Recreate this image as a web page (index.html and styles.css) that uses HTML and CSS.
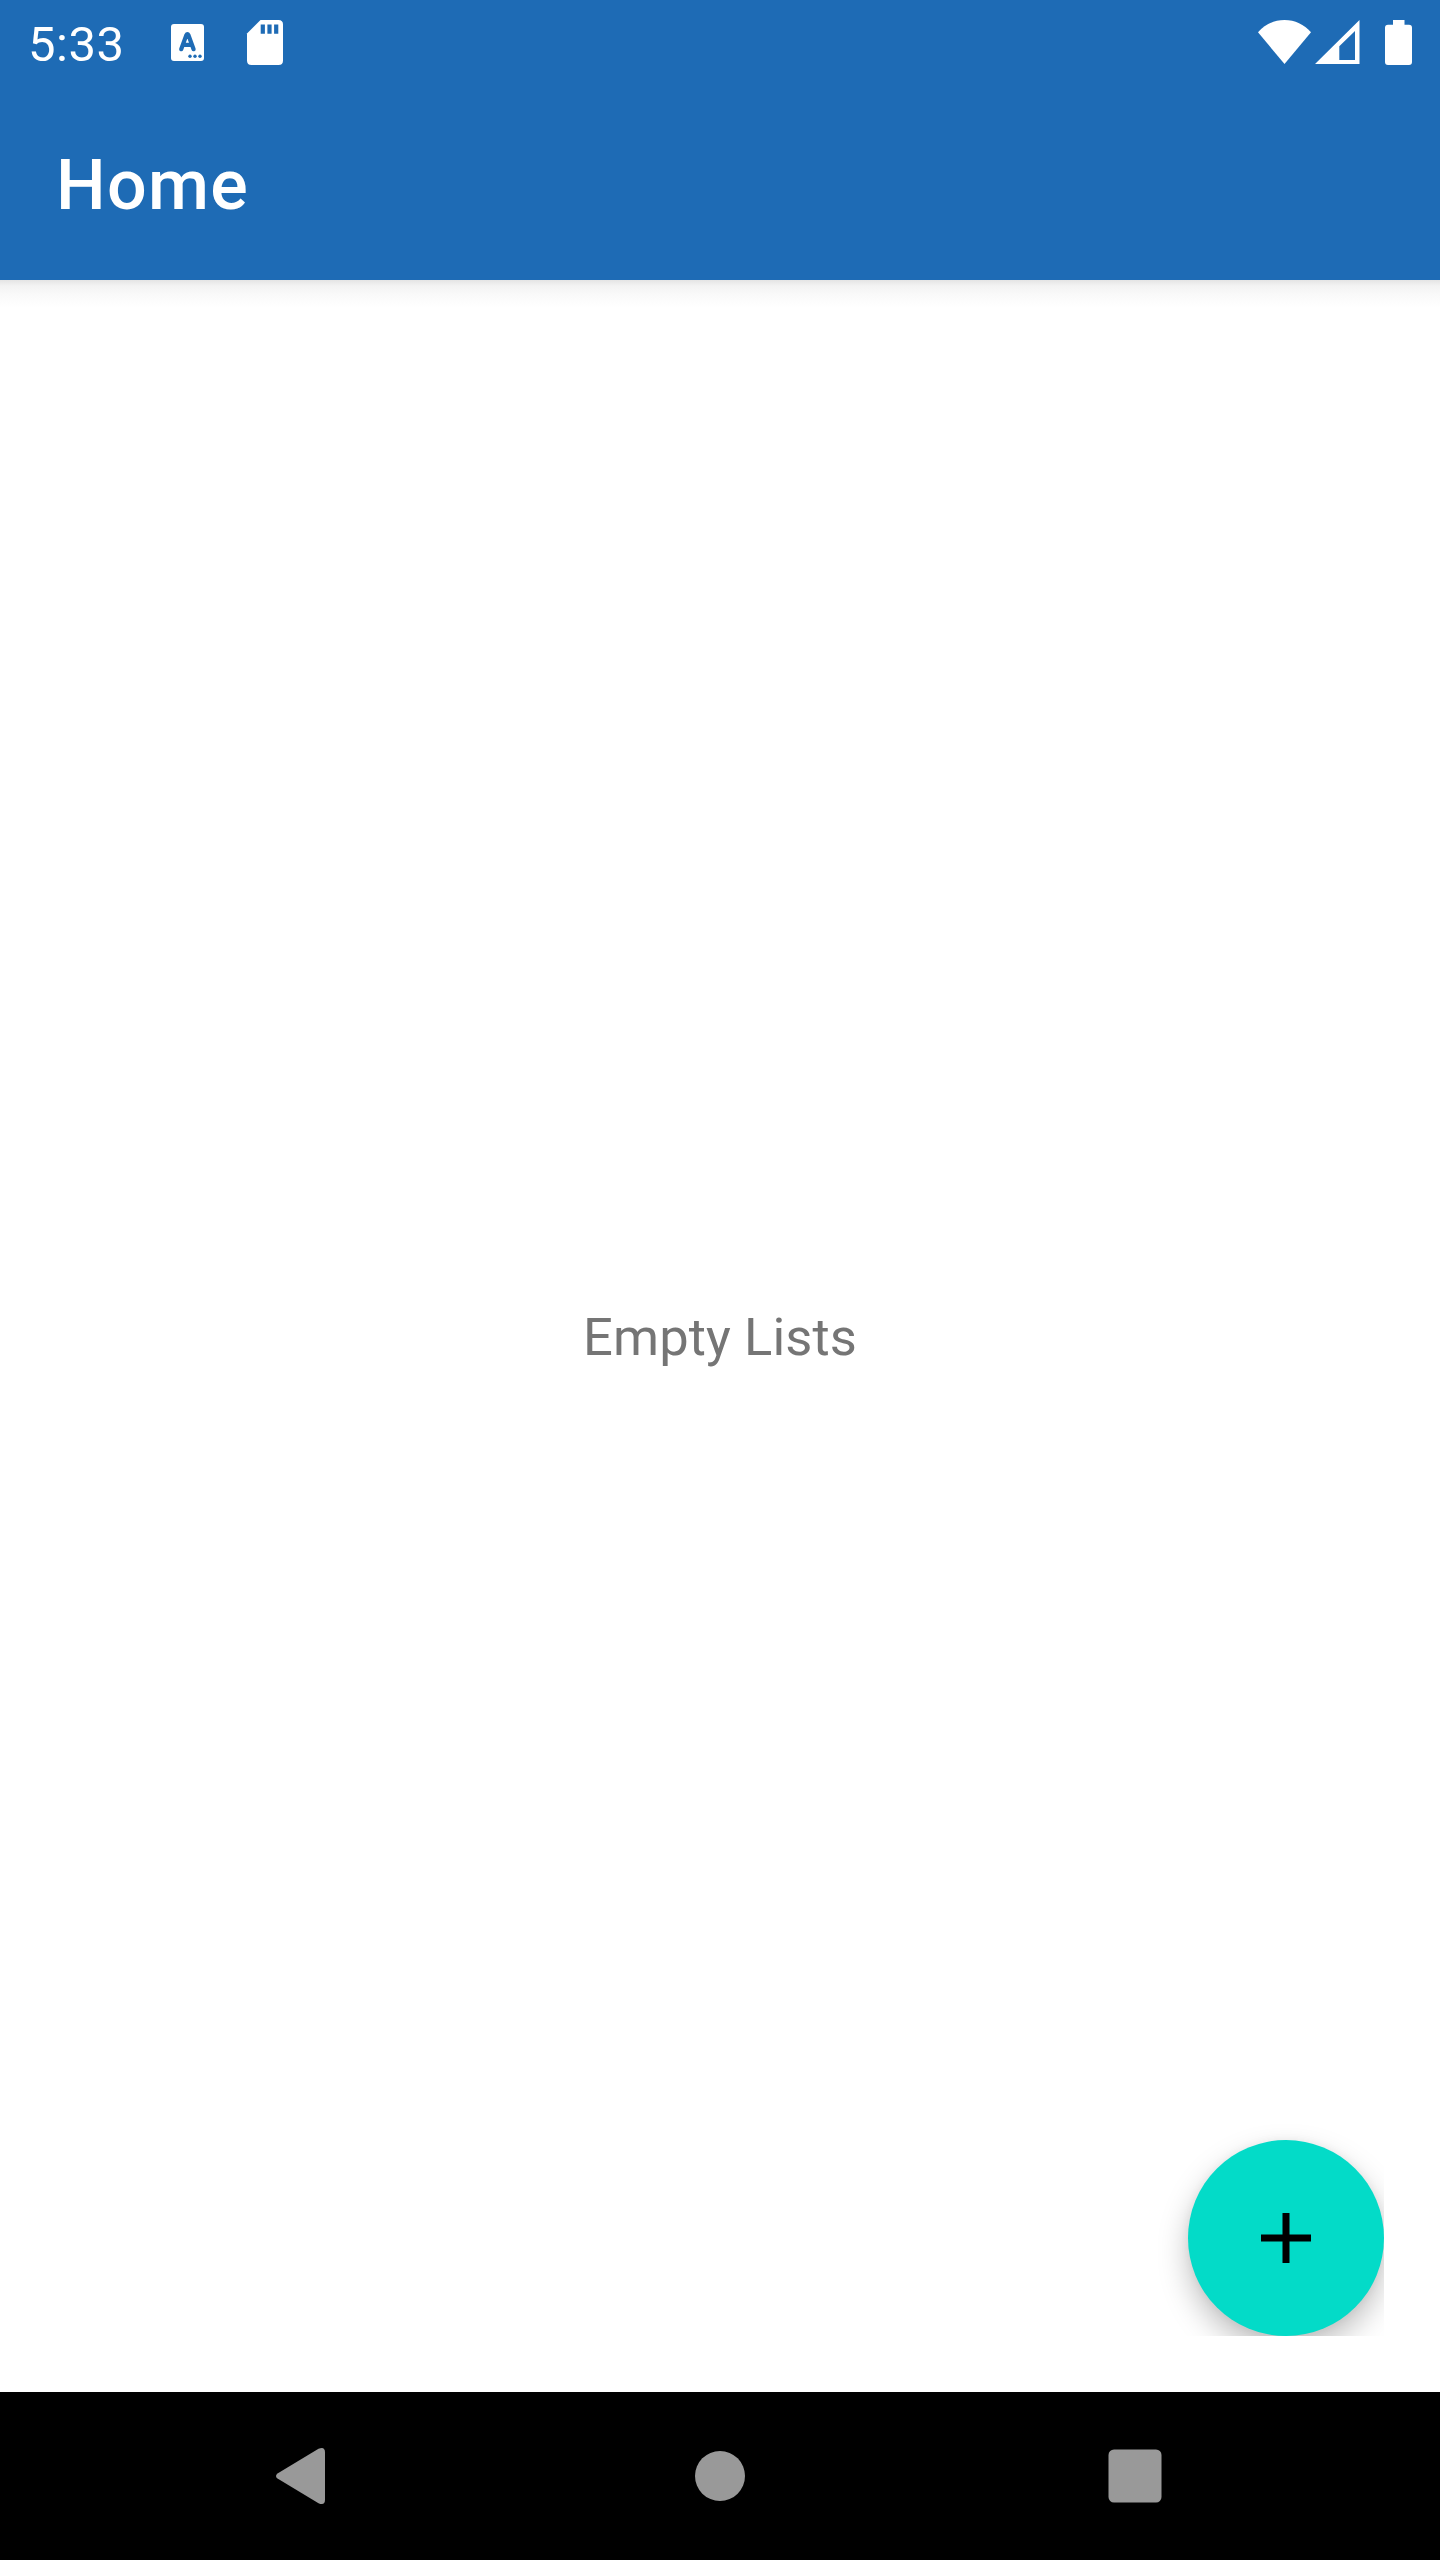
FILE: index.html
```html
<!DOCTYPE html>
<html lang="en">
<head>
  <meta charset="utf-8">
  <title>Home</title>
  <link rel="stylesheet" href="styles.css">
</head>
<body>
  <div class="screen">
    <header class="header">
      <div class="status-bar">
        <div class="status-left">
          <span class="clock">5:33</span>
          <svg class="icon-input" viewBox="0 0 33 37">
            <rect width="33" height="37" rx="3" fill="#fff"/>
            <path d="M10.2 25.2 15.3 11.2Q16.4 8.8 17.5 11.2L22.6 25.2M12.3 20.8H20.7" fill="none" stroke="#1e6bb5" stroke-width="4.2" stroke-linecap="round" stroke-linejoin="round"/>
            <g fill="#1e6bb5"><circle cx="19" cy="32.3" r="1.7"/><circle cx="24" cy="32.3" r="1.7"/><circle cx="29" cy="32.3" r="1.7"/></g>
          </svg>
          <svg class="icon-sd" viewBox="0 0 36 45">
            <path d="M13.5 0H31.5Q36 0 36 4.500V40.500Q36 45 31.500 45H4.500Q0 45 0 40.500V13.500Z" fill="#fff"/>
            <path d="M13.700 4.500h4.200v9.200h-4.200zM20.400 4.500h4.200v9.200h-4.200zM27.100 4.500h4.200v9.200h-4.200z" fill="#1e6bb5"/>
          </svg>
        </div>
        <div class="status-right">
          <svg class="icon-wifi" viewBox="0 0 53 44">
            <path d="M0 12.300C7 4.400 16 0 26.500 0S46 4.400 53 12.300L26.500 44Z" fill="#fff"/>
          </svg>
          <svg class="icon-signal" viewBox="0 0 45 44">
            <path fill-rule="evenodd" d="M0 44 44.500 0V44ZM24.300 26.300V40H40V11Z" fill="#fff"/>
          </svg>
          <svg class="icon-battery" viewBox="0 0 27 45">
            <path d="M8 0H19.500V4.700H24Q27 4.700 27 7.700V42Q27 45 24 45H3Q0 45 0 42V7.700Q0 4.700 3 4.700H8Z" fill="#fff"/>
          </svg>
        </div>
      </div>
      <h1 class="title">Home</h1>
    </header>
    <main class="content">
      <p class="empty">Empty Lists</p>
      <button class="fab" aria-label="Add">
        <svg class="icon-add" viewBox="0 0 50 50"><path d="M21.500 0h7v21.500H50v7H28.500V50h-7V28.500H0v-7h21.500z"/></svg>
      </button>
    </main>
    <nav class="nav-bar">
      <svg class="nav-icon" viewBox="0 0 60 60"><path d="M2.500 27.400 43.500 2.800Q50 0 50 6.500V53.500Q50 60 43.500 57.200L2.500 32.600Q-.5 30 2.500 27.400Z"/></svg>
      <svg class="nav-icon" viewBox="0 0 60 60"><circle cx="30" cy="30" r="25"/></svg>
      <svg class="nav-icon" viewBox="0 0 60 60"><rect x="3.500" y="3.500" width="53" height="53" rx="5.500"/></svg>
    </nav>
  </div>
</body>
</html>
```
FILE: styles.css
```css
* {
  box-sizing: border-box;
}

body {
  margin: 0;
  font-family: Roboto, "Liberation Sans", sans-serif;
}

.screen {
  display: flex;
  flex-direction: column;
  width: 1440px;
  height: 2560px;
  background: #fff;
  overflow: hidden;
}

svg {
  display: block;
  flex: none;
  overflow: visible;
}

.header {
  height: 280px;
  background: #1e6bb5;
  color: #fff;
}

.status-bar {
  display: flex;
  justify-content: space-between;
  height: 84px;
  padding: 0 28px;
}

.status-left,
.status-right {
  display: flex;
  align-items: flex-start;
}

.clock {
  width: 143px;
  padding-top: 16px;
  font-size: 49px;
  line-height: 57px;
  letter-spacing: 0.500px;
}

.icon-input {
  width: 33px;
  height: 37px;
  margin-top: 24px;
}

.icon-sd {
  width: 36px;
  height: 45px;
  margin: 20px 0 0 42.500px;
}

.icon-wifi {
  width: 53px;
  height: 44px;
  margin-top: 19.500px;
}

.icon-signal {
  width: 45px;
  height: 44px;
  margin: 19.500px 0 0 4px;
}

.icon-battery {
  width: 27px;
  height: 45px;
  margin: 19.500px 0 0 25px;
}

.title {
  margin: 0;
  padding: 60px 0 0 56px;
  font-size: 70px;
  line-height: 82px;
  font-weight: 500;
  letter-spacing: 1.300px;
}

.content {
  position: relative;
  display: flex;
  flex: 1;
  align-items: center;
  justify-content: center;
  background: linear-gradient(#e4e4e4, #f3f3f3 6px, #f9f9f9 14px, #fff 27px);
}

.empty {
  margin: 0;
  padding-top: 2px;
  color: #757575;
  font-size: 52.500px;
  line-height: 62px;
  letter-spacing: 0.100px;
}

.fab {
  position: absolute;
  right: 56px;
  bottom: 56px;
  display: flex;
  align-items: center;
  justify-content: center;
  width: 196px;
  height: 196px;
  padding: 0;
  border: 0;
  border-radius: 50%;
  background: #03dbc8;
  box-shadow: 0 14px 30px rgba(0, 0, 0, 0.25), 0 0 10px rgba(0, 0, 0, 0.05);
  clip-path: inset(-60px 0 0 -60px);
}

.icon-add {
  width: 50px;
  height: 50px;
}

.nav-bar {
  display: flex;
  align-items: center;
  justify-content: center;
  gap: 355px;
  height: 168px;
  background: #000;
}

.nav-icon {
  width: 60px;
  height: 60px;
  fill: #999;
}
```
